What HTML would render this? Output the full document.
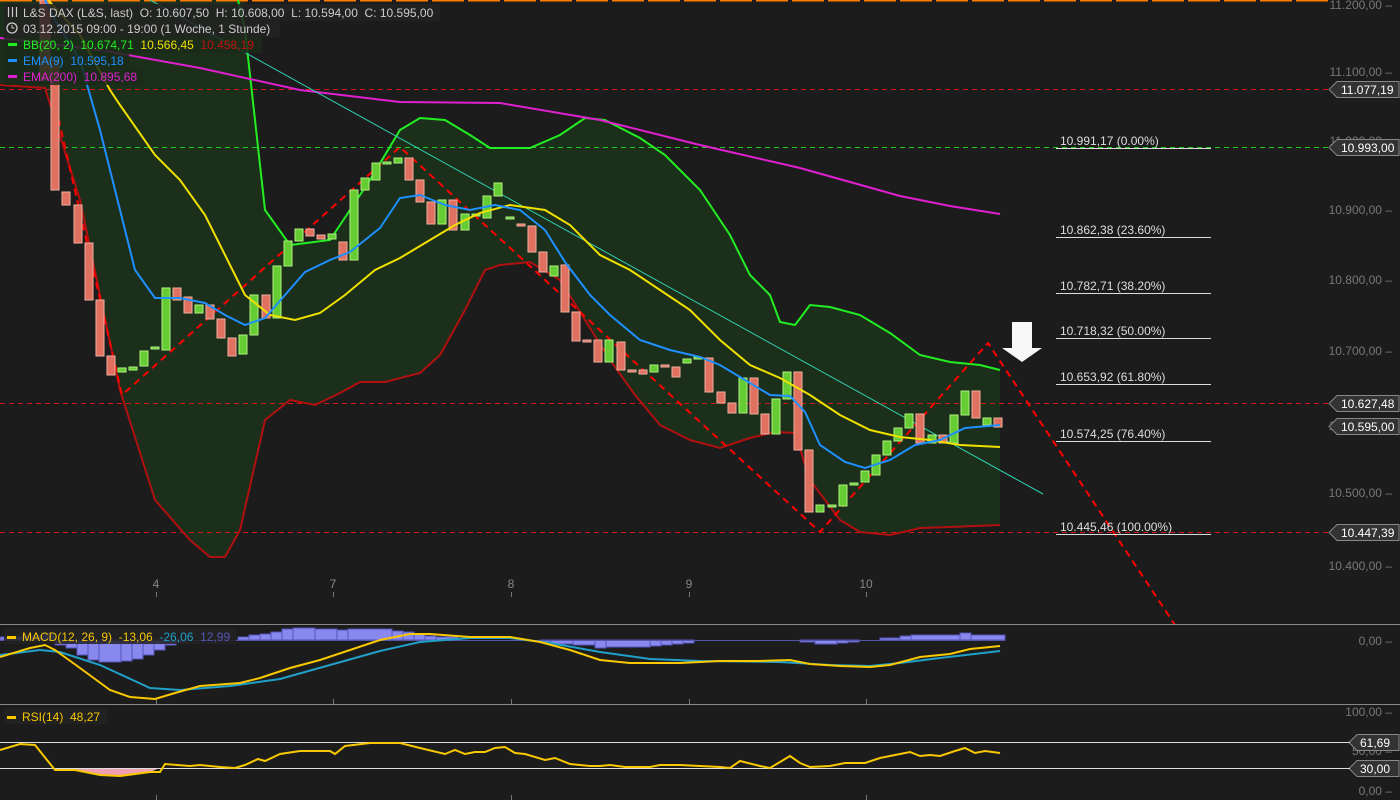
<!DOCTYPE html>
<html><head><meta charset="utf-8"><style>
html,body{margin:0;padding:0;background:#1c1c1c;}
svg{display:block;font-family:"Liberation Sans",sans-serif;}
text{white-space:pre;}
</style></head><body>
<svg width="1400" height="800" viewBox="0 0 1400 800" xmlns="http://www.w3.org/2000/svg" xml:space="preserve">
<rect width="1400" height="800" fill="#1c1c1c"/>
<path d="M0,0 L245,0 L245,30 L265,210 L290,245 L330,240 L370,180 L400,130 L420,118 L445,120 L470,135 L490,148 L530,148 L560,135 L585,118 L605,120 L640,138 L665,155 L700,190 L730,235 L750,275 L770,295 L780,322 L795,325 L810,305 L830,307 L860,315 L890,333 L920,355 L950,362 L980,365 L1000,370 L1000,525 L950,527 L920,528 L890,535 L860,532 L840,520 L810,480 L795,433 L775,432 L750,438 L720,448 L690,440 L660,425 L635,395 L610,360 L585,320 L560,280 L530,262 L500,265 L485,270 L465,310 L440,355 L420,373 L385,382 L360,382 L340,393 L315,405 L290,400 L265,420 L240,530 L225,557 L210,557 L190,540 L155,500 L120,390 L80,200 L45,88 L0,85 Z" fill="#1b2f1a"/>
<line x1="0" y1="0.5" x2="1330" y2="0.5" stroke="#ff7a00" stroke-width="2" stroke-dasharray="32,4"/>
<line x1="0" y1="89.5" x2="1328" y2="89.5" stroke="#d01818" stroke-dasharray="5,4"/>
<line x1="0" y1="147.5" x2="1328" y2="147.5" stroke="#22cc22" stroke-dasharray="5,4"/>
<line x1="0" y1="403.5" x2="1328" y2="403.5" stroke="#d01818" stroke-dasharray="5,4"/>
<line x1="0" y1="532.5" x2="1328" y2="532.5" stroke="#d01818" stroke-dasharray="5,4"/>
<polyline fill="none" stroke="#22ee22" stroke-width="2" points="238,0 245,30 265,210 290,245 330,240 370,180 400,130 420,118 445,120 470,135 490,148 530,148 560,135 585,118 605,120 640,138 665,155 700,190 730,235 750,275 770,295 780,322 795,325 810,305 830,307 860,315 890,333 920,355 950,362 980,365 1000,370"/>
<polyline fill="none" stroke="#b01010" stroke-width="2" points="0,85 45,88 80,200 120,390 155,500 190,540 210,557 225,557 240,530 265,420 290,400 315,405 340,393 360,382 385,382 420,373 440,355 465,310 485,270 500,265 530,262 560,280 585,320 610,360 635,395 660,425 690,440 720,448 750,438 775,432 795,433 810,480 840,520 860,532 890,535 920,528 950,527 1000,525"/>
<polyline fill="none" stroke="#e020d0" stroke-width="2" points="0,38 100,50 200,68 300,90 400,102 500,103 600,120 700,145 800,168 850,182 900,196 950,206 1000,214"/>
<line x1="150" y1="0" x2="1043" y2="494" stroke="#30d0b0" stroke-width="1"/>
<polyline fill="none" stroke="#ff0000" stroke-width="2" stroke-dasharray="7,5" points="45,60 122,395 400,147 820,532 988,343 1175,625"/>
<g stroke-width="1">
<g fill="#66cc33" stroke="#b0f080">
<rect x="118" y="368" width="8" height="4"/><rect x="129" y="367" width="8" height="3"/><rect x="140" y="351" width="8" height="15"/><rect x="151" y="347" width="8" height="2"/><rect x="162" y="288" width="8" height="62"/><rect x="195" y="305" width="8" height="8"/><rect x="239" y="335" width="8" height="19"/><rect x="250" y="295" width="8" height="40"/><rect x="273" y="266" width="8" height="52"/><rect x="284" y="241" width="8" height="25"/><rect x="295" y="229" width="8" height="12"/><rect x="328" y="234" width="8" height="5"/><rect x="350" y="190" width="8" height="70"/><rect x="361" y="178" width="8" height="12"/><rect x="372" y="163" width="8" height="17"/><rect x="383" y="162" width="8" height="2"/><rect x="394" y="158" width="8" height="5"/><rect x="438" y="200" width="8" height="24"/><rect x="461" y="214" width="8" height="16"/><rect x="472" y="214" width="8" height="2"/><rect x="483" y="196" width="8" height="22"/><rect x="494" y="183" width="8" height="13"/><rect x="506" y="217" width="8" height="2"/><rect x="550" y="266" width="8" height="10"/><rect x="605" y="340" width="8" height="22"/><rect x="650" y="365" width="8" height="7"/><rect x="683" y="359" width="8" height="4"/><rect x="694" y="357" width="8" height="2"/><rect x="739" y="378" width="8" height="35"/><rect x="772" y="399" width="8" height="35"/><rect x="783" y="372" width="8" height="27"/><rect x="816" y="505" width="8" height="7"/><rect x="828" y="505" width="8" height="2"/><rect x="839" y="485" width="8" height="21"/><rect x="850" y="483" width="8" height="2"/><rect x="861" y="471" width="8" height="11"/><rect x="872" y="455" width="8" height="20"/><rect x="883" y="441" width="8" height="14"/><rect x="894" y="428" width="8" height="13"/><rect x="905" y="414" width="8" height="14"/><rect x="928" y="435" width="8" height="8"/><rect x="950" y="415" width="8" height="28"/><rect x="961" y="391" width="8" height="24"/><rect x="983" y="418" width="8" height="7"/>
</g>
<g fill="#e07060" stroke="#f0b0a0">
<rect x="40" y="0" width="10" height="80"/><rect x="51" y="60" width="8" height="130"/><rect x="62" y="192" width="8" height="13"/><rect x="74" y="205" width="8" height="38"/><rect x="85" y="243" width="8" height="57"/><rect x="96" y="300" width="8" height="56"/><rect x="107" y="356" width="8" height="19"/><rect x="173" y="288" width="8" height="12"/><rect x="184" y="297" width="8" height="16"/><rect x="206" y="305" width="8" height="14"/><rect x="217" y="319" width="8" height="19"/><rect x="228" y="338" width="8" height="18"/><rect x="262" y="295" width="8" height="23"/><rect x="306" y="229" width="8" height="7"/><rect x="317" y="235" width="8" height="4"/><rect x="339" y="242" width="8" height="18"/><rect x="405" y="158" width="8" height="22"/><rect x="416" y="180" width="8" height="22"/><rect x="427" y="202" width="8" height="22"/><rect x="449" y="200" width="8" height="30"/><rect x="517" y="224" width="8" height="2"/><rect x="528" y="226" width="8" height="26"/><rect x="539" y="252" width="8" height="20"/><rect x="561" y="265" width="8" height="47"/><rect x="572" y="312" width="8" height="29"/><rect x="583" y="340" width="8" height="2"/><rect x="594" y="340" width="8" height="22"/><rect x="617" y="342" width="8" height="28"/><rect x="628" y="370" width="8" height="2"/><rect x="639" y="370" width="8" height="4"/><rect x="661" y="365" width="8" height="2"/><rect x="672" y="367" width="8" height="10"/><rect x="705" y="358" width="8" height="34"/><rect x="717" y="392" width="8" height="11"/><rect x="728" y="403" width="8" height="10"/><rect x="750" y="378" width="8" height="36"/><rect x="761" y="414" width="8" height="20"/><rect x="794" y="372" width="8" height="78"/><rect x="805" y="450" width="8" height="62"/><rect x="916" y="414" width="8" height="29"/><rect x="939" y="435" width="8" height="8"/><rect x="972" y="391" width="8" height="27"/><rect x="994" y="418" width="8" height="9"/>
</g>
</g>
<polyline fill="none" stroke="#f0e000" stroke-width="2" points="48,0 80,35 110,90 120,105 155,155 180,180 205,215 225,255 245,295 270,315 295,320 320,313 345,295 375,270 400,258 430,240 455,225 480,213 510,205 545,210 570,225 600,255 630,270 660,290 690,310 720,340 750,365 780,378 810,395 840,415 870,430 900,437 930,440 960,445 1000,447"/>
<polyline fill="none" stroke="#1e90ff" stroke-width="2" points="45,0 55,20 80,60 100,130 120,210 135,270 155,298 180,298 205,303 225,315 245,325 265,318 285,295 305,272 330,260 350,252 380,228 400,198 420,195 445,205 470,210 495,205 520,210 545,230 565,262 590,295 610,315 640,340 670,350 700,357 720,365 745,380 770,395 790,396 805,412 820,445 845,462 865,468 890,460 915,445 940,440 965,428 1000,425"/>
<path d="M1012,322 H1032 V348 H1042 L1022,362 L1002,348 H1012 Z" fill="#f8f8f8"/>
<g font-size="12">
<rect x="4" y="4" width="436" height="17" fill="#222" opacity="0.85"/>
<rect x="4" y="21" width="276" height="16" fill="#222" opacity="0.85"/>
<rect x="4" y="37" width="258" height="16" fill="#1b2a1a" opacity="0.85"/>
<rect x="4" y="53" width="125" height="16" fill="#1b2a1a" opacity="0.85"/>
<rect x="4" y="69" width="139" height="16" fill="#1b2a1a" opacity="0.85"/>
<g stroke="#ccc" stroke-width="1.2"><line x1="8.5" y1="7" x2="8.5" y2="17"/><line x1="12.5" y1="7" x2="12.5" y2="17"/><line x1="16.5" y1="7" x2="16.5" y2="17"/></g>
<text x="23" y="17" fill="#ccc">L&amp;S DAX (L&amp;S, last)  O: 10.607,50  H: 10.608,00  L: 10.594,00  C: 10.595,00</text>
<circle cx="12" cy="28" r="5" fill="none" stroke="#ccc" stroke-width="1.3"/><path d="M12,25 V28 H14.5" stroke="#ccc" fill="none"/>
<text x="23" y="33" fill="#ccc">03.12.2015 09:00 - 19:00 (1 Woche, 1 Stunde)</text>
<rect x="8" y="43" width="9" height="3" fill="#22ee22"/>
<text x="23" y="49" fill="#22ee22">BB(20, 2)  10.674,71  <tspan fill="#f0e000">10.566,45</tspan>  <tspan fill="#c01010">10.458,19</tspan></text>
<rect x="8" y="59" width="9" height="3" fill="#1e90ff"/>
<text x="23" y="65" fill="#1e90ff">EMA(9)  10.595,18</text>
<rect x="8" y="75" width="9" height="3" fill="#e020d0"/>
<text x="23" y="81" fill="#e020d0">EMA(200)  10.895,68</text>
</g>
<g font-size="12" fill="#ddd">
<text x="1060" y="145">10.991,17 (0.00%)</text><line x1="1056" y1="148.5" x2="1211" y2="148.5" stroke="#ddd"/>
<text x="1060" y="234">10.862,38 (23.60%)</text><line x1="1056" y1="237.5" x2="1211" y2="237.5" stroke="#ddd"/>
<text x="1060" y="290">10.782,71 (38.20%)</text><line x1="1056" y1="293.5" x2="1211" y2="293.5" stroke="#ddd"/>
<text x="1060" y="335">10.718,32 (50.00%)</text><line x1="1056" y1="338.5" x2="1211" y2="338.5" stroke="#ddd"/>
<text x="1060" y="381">10.653,92 (61.80%)</text><line x1="1056" y1="384.5" x2="1211" y2="384.5" stroke="#ddd"/>
<text x="1060" y="438">10.574,25 (76.40%)</text><line x1="1056" y1="441.5" x2="1211" y2="441.5" stroke="#ddd"/>
<text x="1060" y="531">10.445,46 (100.00%)</text><line x1="1056" y1="534.5" x2="1211" y2="534.5" stroke="#ddd"/>
</g>
<g font-size="12" fill="#777" text-anchor="end">
<text x="1392" y="9">11.200,00 –</text>
<text x="1392" y="76">11.100,00 –</text>
<text x="1392" y="145">11.000,00 –</text>
<text x="1392" y="214">10.900,00 –</text>
<text x="1392" y="284">10.800,00 –</text>
<text x="1392" y="355">10.700,00 –</text>
<text x="1392" y="430">10.600,00 –</text>
<text x="1392" y="497">10.500,00 –</text>
<text x="1392" y="570">10.400,00 –</text>
<text x="1392" y="645">0,00 –</text>
<text x="1392" y="716">100,00 –</text>
<text x="1392" y="755">50,00 –</text>
<text x="1392" y="795">0,00 –</text>
</g>
<g font-size="12" fill="#fff">
<g><path d="M1329,89.5 L1337,81.5 H1399 V97.5 H1337 Z" fill="#333" stroke="#888"/><text x="1341" y="94">11.077,19</text></g>
<g><path d="M1329,147.5 L1337,139.5 H1399 V155.5 H1337 Z" fill="#333" stroke="#888"/><text x="1341" y="152">10.993,00</text></g>
<g><path d="M1329,403.5 L1337,395.5 H1399 V411.5 H1337 Z" fill="#333" stroke="#888"/><text x="1341" y="408">10.627,48</text></g>
<g><path d="M1329,426.5 L1337,418.5 H1399 V434.5 H1337 Z" fill="#333" stroke="#888"/><text x="1341" y="431">10.595,00</text></g>
<g><path d="M1329,532.5 L1337,524.5 H1399 V540.5 H1337 Z" fill="#333" stroke="#888"/><text x="1341" y="537">10.447,39</text></g>
<g><path d="M1349,742.5 L1357,734.5 H1399 V750.5 H1357 Z" fill="#333" stroke="#888"/><text x="1360" y="747">61,69</text></g>
<g><path d="M1349,768.5 L1357,760.5 H1399 V776.5 H1357 Z" fill="#333" stroke="#888"/><text x="1360" y="773">30,00</text></g>
</g>
<g font-size="12" fill="#888" text-anchor="middle">
<text x="156" y="588">4</text><text x="333" y="588">7</text><text x="511" y="588">8</text><text x="689" y="588">9</text><text x="866" y="588">10</text>
</g>
<g stroke="#777">
<line x1="156.5" y1="592" x2="156.5" y2="597"/><line x1="333.5" y1="592" x2="333.5" y2="597"/><line x1="511.5" y1="592" x2="511.5" y2="597"/><line x1="689.5" y1="592" x2="689.5" y2="597"/><line x1="866.5" y1="592" x2="866.5" y2="597"/>
<line x1="156.5" y1="699" x2="156.5" y2="704"/><line x1="333.5" y1="699" x2="333.5" y2="704"/><line x1="511.5" y1="699" x2="511.5" y2="704"/><line x1="689.5" y1="699" x2="689.5" y2="704"/><line x1="866.5" y1="699" x2="866.5" y2="704"/>
<line x1="156.5" y1="795" x2="156.5" y2="800"/><line x1="511.5" y1="795" x2="511.5" y2="800"/><line x1="866.5" y1="795" x2="866.5" y2="800"/>
</g>
<line x1="0" y1="624.5" x2="1400" y2="624.5" stroke="#888"/>
<line x1="0" y1="704.5" x2="1400" y2="704.5" stroke="#888"/>
<path fill="#8888ee" stroke="#5555bb" stroke-width="1" d="M0,637H22V640H0Z M22,635H44V640H22Z M44,633H55V640H44Z M55,640H66V645H55Z M66,640H77V648H66Z M77,640H88V655H77Z M88,640H99V660H88Z M99,640H121V662H99Z M121,640H132V661H121Z M132,640H143V659H132Z M143,640H154V655H143Z M154,640H165V650H154Z M165,640H176V645H165Z M176,640H187V642H176Z M238,637H249V640H238Z M249,635H260V640H249Z M260,634H271V640H260Z M271,632H282V640H271Z M282,629H293V640H282Z M293,628H315V640H293Z M315,629H337V640H315Z M337,630H348V640H337Z M348,629H392V640H348Z M392,631H403V640H392Z M403,632H414V640H403Z M414,634H425V640H414Z M425,636H436V640H425Z M436,637H458V640H436Z M540,640H551V642H540Z M551,640H573V644H551Z M573,640H595V645H573Z M595,640H606V648H595Z M606,640H650V647H606Z M650,640H661V646H650Z M661,640H672V645H661Z M672,640H683V644H672Z M683,640H694V643H683Z M800,640H815V642H800Z M815,640H837V644H815Z M837,640H848V643H837Z M848,640H859V642H848Z M880,638H900V640H880Z M900,636H911V640H900Z M911,635H960V640H911Z M960,633H971V640H960Z M971,635H1005V640H971Z"/>
<line x1="0" y1="640.5" x2="1005" y2="640.5" stroke="#5555aa"/>
<polyline fill="none" stroke="#20a0c8" stroke-width="2" points="0,655 40,650 60,652 100,665 150,688 180,690 230,686 280,679 330,665 380,651 420,642 470,638 510,638 550,643 600,652 650,659 700,661 780,662 830,665 870,666 900,663 940,658 1000,651"/>
<polyline fill="none" stroke="#f8c800" stroke-width="2" points="0,657 30,648 45,645 55,650 80,668 110,690 130,697 155,699 175,693 200,686 240,683 260,678 290,668 320,660 350,650 380,640 410,634 430,634 470,637 510,637 540,642 570,650 600,660 630,663 680,663 720,661 760,661 790,660 810,664 840,666 870,667 890,665 920,657 950,654 970,649 1000,646"/>
<rect x="4" y="629" width="232" height="15" fill="#222" opacity="0.85"/>
<rect x="7" y="636" width="9" height="3" fill="#f8c800"/>
<text x="22" y="641" font-size="12" fill="#f8c800">MACD(12, 26, 9)  -13,06  <tspan fill="#20a0c8">-26,06</tspan>  <tspan fill="#5555bb">12,99</tspan></text>
<path d="M55,768 L75,770 L100,775 L120,776 L150,772 L160,768 Z" fill="#f0a0b0"/>
<line x1="0" y1="742.5" x2="1350" y2="742.5" stroke="#ddd"/>
<line x1="0" y1="768.5" x2="1350" y2="768.5" stroke="#ddd"/>
<polyline fill="none" stroke="#f8c800" stroke-width="2" points="0,750 20,744 35,745 55,770 75,770 100,775 120,776 150,772 160,772 165,764 190,766 200,765 220,767 235,768 245,765 258,759 265,761 280,754 300,751 330,751 335,754 345,746 370,743 400,743 420,748 445,754 455,750 465,754 475,752 485,752 495,748 505,747 515,753 525,754 545,760 555,758 570,764 590,766 600,766 610,765 625,767 650,767 660,765 680,765 700,766 720,767 730,768 740,761 760,766 770,768 785,759 790,756 800,763 810,767 830,766 845,763 865,763 880,758 895,755 910,752 920,756 930,755 940,756 955,751 965,748 975,753 985,751 1000,753"/>
<rect x="4" y="709" width="103" height="15" fill="#222" opacity="0.85"/>
<rect x="7" y="716" width="9" height="3" fill="#f8c800"/>
<text x="22" y="721" font-size="12" fill="#f8c800">RSI(14)  48,27</text>
</svg>
</body></html>
